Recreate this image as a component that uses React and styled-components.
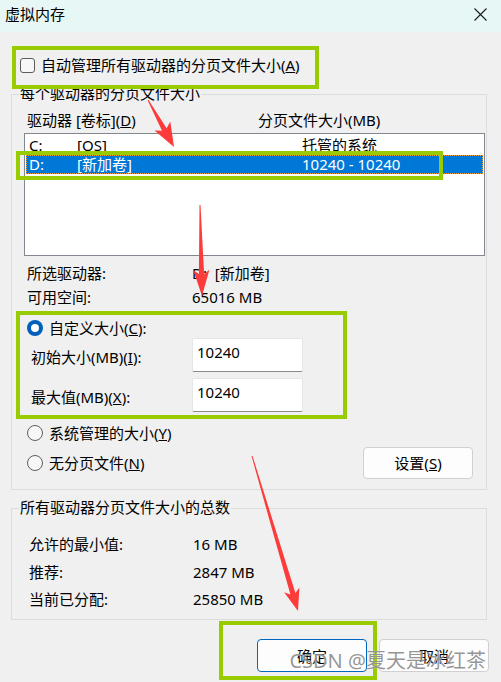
import React from "react";
import styled, { createGlobalStyle } from "styled-components";

const GlobalStyle = createGlobalStyle`
  body {
    margin: 0;
    background: #f0f0f0;
  }
  * {
    box-sizing: border-box;
  }
`;

const Window = styled.div`
  position: relative;
  width: 501px;
  height: 682px;
  overflow: hidden;
  background: #f0f0f0;
  font-family: "Noto Sans", "Noto Sans CJK SC", sans-serif;
  font-size: 15px;
  line-height: 20px;
  color: #000;
`;

const TitleBar = styled.div`
  height: 32px;
  display: flex;
  align-items: center;
  justify-content: space-between;
  padding: 0 14px 4px 5px;
  background: #e6f7f5;
`;

const Content = styled.div`
  padding: 0 12px 0 11px;
`;

const AutoRow = styled.label`
  display: flex;
  align-items: center;
  gap: 6px;
  height: 20px;
  margin-top: 23px;
  padding-left: 9px;
`;

const CheckBox = styled.span`
  width: 15px;
  height: 15px;
  border: 1px solid #5c5c5c;
  border-radius: 3px;
  background: #f7f7f7;
`;

const Group = styled.div`
  width: 476px;
  margin-top: ${(p) => p.$top}px;
  padding-bottom: 10px;
  border: 1px solid #dcdcdc;
`;

const Legend = styled.div`
  width: fit-content;
  margin: -12px 0 0 7px;
  padding: 0 1px;
  background: #f0f0f0;
`;

const ColumnHeader = styled.div`
  display: grid;
  grid-template-columns: 231px 1fr;
  margin-top: 7px;
  padding-left: 15px;
`;

const ListBox = styled.div`
  height: 123px;
  margin: 3px 1px 0 12px;
  padding: 2px 1px 0;
  border: 1px solid #828790;
  background: #fff;
`;

const DriveRow = styled.div`
  display: grid;
  grid-template-columns: 48px 225px 1fr;
  height: 19px;
  line-height: 19px;
  padding-left: 3px;
  background: ${(p) => (p.$selected ? "#0078d7" : "transparent")};
  color: ${(p) => (p.$selected ? "#fff" : "#000")};
  outline: ${(p) => (p.$selected ? "1px dotted #f3a03c" : "none")};
  outline-offset: -1px;
`;

const InfoRow = styled.div`
  display: grid;
  grid-template-columns: ${(p) => p.$label}px 1fr;
  margin-top: ${(p) => p.$top}px;
  padding-left: ${(p) => p.$indent}px;
  white-space: pre;
`;

const RadioRow = styled.label`
  display: flex;
  align-items: center;
  gap: 6px;
  height: 20px;
  margin-top: ${(p) => p.$top}px;
  padding-left: 15px;
`;

const Radio = styled.span`
  position: relative;
  width: 16px;
  height: 16px;
  border-radius: 50%;
  border: ${(p) => (p.$checked ? "none" : "1px solid #5f5f5f")};
  background: ${(p) => (p.$checked ? "#005fb8" : "#f7f7f7")};

  &::after {
    content: "";
    display: ${(p) => (p.$checked ? "block" : "none")};
    position: absolute;
    left: 4px;
    top: 4px;
    width: 8px;
    height: 8px;
    border-radius: 50%;
    background: #fff;
  }
`;

const FieldRow = styled.div`
  display: grid;
  grid-template-columns: 161px 111px;
  align-items: center;
  height: 34px;
  margin-top: ${(p) => p.$top}px;
  padding-left: 19px;
`;

const FieldLabel = styled.span`
  padding-top: 4px;
`;

const TextBox = styled.div`
  height: 34px;
  padding: 3px 0 0 4px;
  border: 1px solid #e6e6e6;
  border-bottom-color: #8a8a8a;
  border-radius: 2px;
  background: #fff;
`;

const BottomRow = styled.div`
  display: flex;
  align-items: center;
  justify-content: space-between;
  height: 32px;
  margin-top: 4px;
  padding-right: 13px;
`;

const Button = styled.button`
  width: 110px;
  height: ${(p) => (p.$tall ? 33 : 32)}px;
  padding: 0;
  border: 1px solid ${(p) => (p.$primary ? "#0067c0" : "#d0d0d0")};
  border-radius: 4px;
  background: #fdfdfd;
  font: inherit;
  color: #000;
`;

const Footer = styled.div`
  display: flex;
  justify-content: flex-end;
  gap: 12px;
  margin-top: 19px;
`;

const Overlay = styled.div`
  position: absolute;
  inset: 0;
  pointer-events: none;
`;

const Highlight = styled.div`
  position: absolute;
  left: ${(p) => p.$x}px;
  top: ${(p) => p.$y}px;
  width: ${(p) => p.$w}px;
  height: ${(p) => p.$h}px;
  border: 4px solid #99cc00;
`;

const Watermark = styled.div`
  position: absolute;
  right: 15px;
  top: 647px;
  font-size: 20px;
  line-height: 27px;
  color: rgba(110, 110, 110, 0.72);
  text-shadow: 0 0 1px rgba(255, 255, 255, 0.9);
  white-space: nowrap;
`;

function arrowPoints(tail, tip, head = 22, half = 8, neck = 2.6) {
  const [tx, ty] = tail;
  const [px, py] = tip;
  const len = Math.hypot(px - tx, py - ty);
  const ux = (px - tx) / len;
  const uy = (py - ty) / len;
  const nx = -uy;
  const ny = ux;
  const bx = px - ux * head;
  const by = py - uy * head;
  const nbx = bx + ux * 4;
  const nby = by + uy * 4;
  const pts = [
    [tx + nx * 0.5, ty + ny * 0.5],
    [nbx + nx * neck, nby + ny * neck],
    [bx + nx * half, by + ny * half],
    [px, py],
    [bx - nx * half, by - ny * half],
    [nbx - nx * neck, nby - ny * neck],
    [tx - nx * 0.5, ty - ny * 0.5],
  ];
  return pts.map(([x, y]) => `${x.toFixed(1)},${y.toFixed(1)}`).join(" ");
}

const arrows = [
  { tail: [148, 100], tip: [174, 147], head: 24, half: 9 },
  { tail: [200, 205], tip: [202, 296], head: 26, half: 8 },
  { tail: [252, 456], tip: [298, 611], head: 22, half: 8 },
];

export default function App() {
  return (
    <Window>
      <GlobalStyle />
      <TitleBar>
        <span>虚拟内存</span>
        <svg width="13" height="13" viewBox="0 0 13 13">
          <path d="M0.5 0.5 L12.5 12.5 M12.5 0.5 L0.5 12.5" stroke="#1a1a1a" strokeWidth="1.1" />
        </svg>
      </TitleBar>

      <Content>
        <AutoRow>
          <CheckBox />
          <span>
            自动管理所有驱动器的分页文件大小(<u>A</u>)
          </span>
        </AutoRow>

        <Group $top={19}>
          <Legend>每个驱动器的分页文件大小</Legend>
          <ColumnHeader>
            <span>
              驱动器 [卷标](<u>D</u>)
            </span>
            <span>分页文件大小(MB)</span>
          </ColumnHeader>
          <ListBox>
            <DriveRow>
              <span>C:</span>
              <span>[OS]</span>
              <span>托管的系统</span>
            </DriveRow>
            <DriveRow $selected>
              <span>D:</span>
              <span>[新加卷]</span>
              <span>10240 - 10240</span>
            </DriveRow>
          </ListBox>

          <InfoRow $label={165} $indent={15} $top={7}>
            <span>所选驱动器:</span>
            <span>D:  [新加卷]</span>
          </InfoRow>
          <InfoRow $label={165} $indent={15} $top={4}>
            <span>可用空间:</span>
            <span>65016 MB</span>
          </InfoRow>

          <RadioRow $top={11}>
            <Radio $checked />
            <span>
              自定义大小(<u>C</u>):
            </span>
          </RadioRow>
          <FieldRow $top={0}>
            <FieldLabel>
              初始大小(MB)(<u>I</u>):
            </FieldLabel>
            <TextBox>10240</TextBox>
          </FieldRow>
          <FieldRow $top={6}>
            <FieldLabel>
              最大值(MB)(<u>X</u>):
            </FieldLabel>
            <TextBox>10240</TextBox>
          </FieldRow>

          <RadioRow $top={11}>
            <Radio />
            <span>
              系统管理的大小(<u>Y</u>)
            </span>
          </RadioRow>
          <BottomRow>
            <RadioRow $top={0}>
              <Radio />
              <span>
                无分页文件(<u>N</u>)
              </span>
            </RadioRow>
            <Button>
              设置(<u>S</u>)
            </Button>
          </BottomRow>
        </Group>

        <Group $top={18}>
          <Legend>所有驱动器分页文件大小的总数</Legend>
          <InfoRow $label={164} $indent={17} $top={17}>
            <span>允许的最小值:</span>
            <span>16 MB</span>
          </InfoRow>
          <InfoRow $label={164} $indent={17} $top={8}>
            <span>推荐:</span>
            <span>2847 MB</span>
          </InfoRow>
          <InfoRow $label={164} $indent={17} $top={7}>
            <span>当前已分配:</span>
            <span>25850 MB</span>
          </InfoRow>
        </Group>

        <Footer>
          <Button $primary $tall>
            确定
          </Button>
          <Button $tall>取消</Button>
        </Footer>
      </Content>

      <Overlay>
        <Highlight $x={12} $y={46} $w={307} $h={43} />
        <Highlight $x={16} $y={151} $w={427} $h={29} />
        <Highlight $x={16} $y={311} $w={331} $h={108} />
        <Highlight $x={219} $y={621} $w={158} $h={59} />
        <svg width="501" height="682" viewBox="0 0 501 682" style={{ position: "absolute", inset: 0 }}>
          {arrows.map((a, i) => (
            <polygon key={i} points={arrowPoints(a.tail, a.tip, a.head, a.half)} fill="#fd3b3b" />
          ))}
        </svg>
        <Watermark>CSDN @夏天是冰红茶</Watermark>
      </Overlay>
    </Window>
  );
}
